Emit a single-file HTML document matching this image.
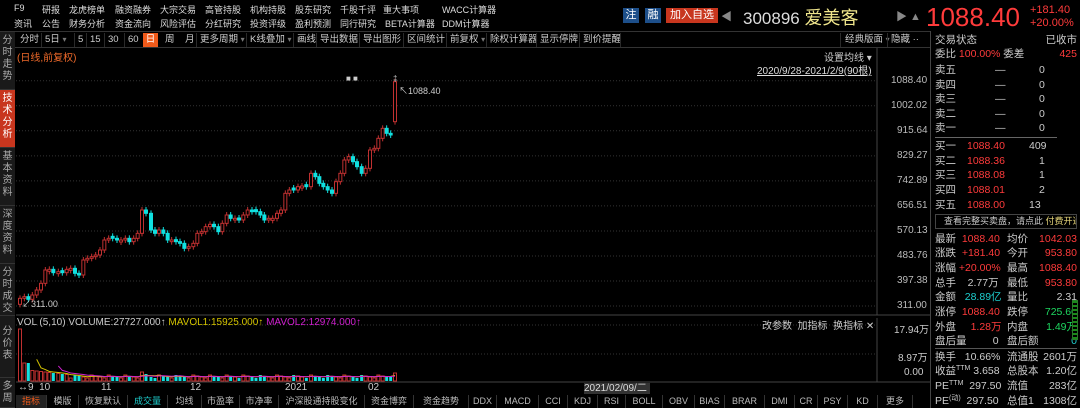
<!DOCTYPE html>
<html><head><meta charset="utf-8"><style>
*{margin:0;padding:0;box-sizing:border-box}
body{width:1080px;height:408px;background:#000;overflow:hidden;position:relative;font-family:"Liberation Sans","Noto Sans CJK SC",sans-serif;font-size:11px;color:#ccc}
.a{position:absolute;white-space:nowrap}
.r{color:#ff3b3b}.g{color:#1ed760}.c{color:#1ecfcf}.w{color:#ddd}
.side div{position:absolute;left:0;width:15px;background:#1a1a1a;color:#aaa;font-size:10px;line-height:12px;text-align:center;padding-top:3px;border-bottom:1px solid #333}
.rp div{position:absolute;height:14px;line-height:14px}
.rp sup{font-size:7px;line-height:0;vertical-align:4px}
.bt span{position:absolute;top:0;height:13px;line-height:13px;text-align:center;border-right:1px solid #333;color:#bbb;font-size:9px}
.tp span{position:absolute;font-size:9px;color:#ddd}
.tb span{position:absolute;top:0;height:14px;line-height:14px;font-size:9.5px;color:#ccc}
.tb i{position:absolute;top:0;width:1px;height:14px;background:#2a2a2a}
</style></head><body>
<div class="a tp" style="left:0;top:3px"><span style="left:14px">F9</span><span style="left:42px">研报</span><span style="left:69px">龙虎榜单</span><span style="left:115px">融资融券</span><span style="left:160px">大宗交易</span><span style="left:205px">高管持股</span><span style="left:250px">机构持股</span><span style="left:295px">股东研究</span><span style="left:340px">千股千评</span><span style="left:383px">重大事项</span><span style="left:442px">WACC计算器</span></div>
<div class="a tp" style="left:0;top:17px"><span style="left:14px">资讯</span><span style="left:42px">公告</span><span style="left:69px">财务分析</span><span style="left:115px">资金流向</span><span style="left:160px">风险评估</span><span style="left:205px">分红研究</span><span style="left:250px">投资评级</span><span style="left:295px">盈利预测</span><span style="left:340px">同行研究</span><span style="left:385px">BETA计算器</span><span style="left:442px">DDM计算器</span></div>
<div class="a" style="left:623px;top:8px;width:16px;height:15px;background:#1d4f8a;color:#fff;text-align:center;line-height:15px">注</div>
<div class="a" style="left:645px;top:8px;width:16px;height:15px;background:#1d4f8a;color:#fff;text-align:center;line-height:15px">融</div>
<div class="a" style="left:666px;top:8px;width:52px;height:15px;background:#c8361e;color:#fff;text-align:center;line-height:15px">加入自选</div>
<div class="a" style="left:721px;top:8px;color:#888">◀</div>
<div class="a" style="left:743px;top:4px;font-size:17px;color:#ddd">300896 <span style="color:#f0e68c;font-size:18px">爱美客</span></div>
<div class="a" style="left:896px;top:8px;color:#888">▶ ▲</div>
<div class="a r" style="left:926px;top:2px;font-size:26px">1088.40</div>
<div class="a r" style="left:1030px;top:4px;font-size:11px">+181.40</div>
<div class="a r" style="left:1030px;top:17px;font-size:11px">+20.00%</div>
<div class="a" style="left:0;top:31px;width:930px;height:1px;background:#333"></div>
<div class="a tb" style="left:0;top:33px;width:930px;height:14px">
<span style="left:20px">分时</span><i style="left:41px"></i><span style="left:45px">5日 <small style="color:#777">▾</small></span><i style="left:74px"></i><span style="left:78px">5</span><i style="left:86px"></i><span style="left:90px">15</span><i style="left:104px"></i><span style="left:108px">30</span><i style="left:124px"></i><span style="left:128px">60</span>
<span style="left:143px;width:15px;background:#f05a1a;color:#fff;text-align:center">日</span><span style="left:165px">周</span><span style="left:185px">月</span><i style="left:196px"></i><span style="left:200px">更多周期 <small style="color:#777">▾</small></span><i style="left:246px"></i><span style="left:250px">K线叠加 <small style="color:#777">▾</small></span><i style="left:293px"></i><span style="left:297px">画线</span><i style="left:316px"></i><span style="left:320px">导出数据</span><i style="left:359px"></i><span style="left:363px">导出图形</span><i style="left:403px"></i><span style="left:407px">区间统计</span><i style="left:446px"></i><span style="left:450px">前复权 <small style="color:#777">▾</small></span><i style="left:486px"></i><span style="left:490px">除权计算器</span><i style="left:536px"></i><span style="left:540px">显示停牌</span><i style="left:579px"></i><span style="left:583px">到价提醒</span><i style="left:620px"></i>
<i style="left:840px"></i><span style="left:845px">经典版面 <small style="color:#777">▾</small></span><i style="left:887px"></i><span style="left:891px">隐藏 ··</span>
</div>
<div class="a" style="left:0;top:47px;width:930px;height:1px;background:#333"></div>
<div class="a" style="left:17px;top:49px;color:#f06a2a;font-size:10px">(日线,前复权)</div>
<div class="a" style="left:824px;top:49px;font-size:10px;color:#ccc">设置均线 ▾</div>
<div class="a" style="left:757px;top:62px;font-size:10px;color:#ddd;text-decoration:underline">2020/9/28-2021/2/9(90根)</div>
<div class="side">
<div style="top:32px;height:58px">分<br>时<br>走<br>势</div>
<div style="top:90px;height:58px;background:#c8361e;color:#fff">技<br>术<br>分<br>析</div>
<div style="top:148px;height:58px">基<br>本<br>资<br>料</div>
<div style="top:206px;height:58px">深<br>度<br>资<br>料</div>
<div style="top:264px;height:52px">分<br>时<br>成<br>交</div>
<div style="top:316px;height:62px;padding-top:10px">分<br>价<br>表</div>
<div style="top:378px;height:30px">多<br>周</div>
</div>
<svg class="a" style="left:0;top:0" width="930" height="408" id="ch">
<g stroke="#333" stroke-dasharray="1,2" id="grid"></g>
<line x1="877" y1="48" x2="877" y2="315" stroke="#444"/>
<line x1="16" y1="315" x2="930" y2="315" stroke="#444"/>
<line x1="877" y1="318" x2="877" y2="382" stroke="#444"/>
<line x1="16" y1="382" x2="930" y2="382" stroke="#444"/>
<line x1="16" y1="325" x2="877" y2="325" stroke="#333" stroke-dasharray="1,2"/>
<line x1="16" y1="354" x2="877" y2="354" stroke="#333" stroke-dasharray="1,2"/>
<g id="cd"></g><g id="vol"></g>
<polyline id="m1" fill="none" stroke="#d4c400" stroke-width="1"/>
<polyline id="m2" fill="none" stroke="#d020d0" stroke-width="1"/>
</svg>
<div class="a" style="left:399px;top:84px;color:#ccc;font-size:9px">↖1088.40</div>
<div class="a" style="left:22px;top:297px;color:#ccc;font-size:9px">↙311.00</div>
<div class="a" style="left:346px;top:74px;color:#ccc;font-size:8px">■ ■</div>
<div class="a" style="left:393px;top:74px;color:#ccc;font-size:8px">‡</div>
<div id="yl"></div>
<div class="a" style="left:17px;top:317px;font-size:10px;color:#ccc">VOL (5,10) VOLUME:27727.000↑ <span style="color:#d4c400">MAVOL1:15925.000↑</span> <span style="color:#d020d0">MAVOL2:12974.000↑</span></div>
<div class="a" style="left:762px;top:317px;font-size:10px;color:#ccc">改参数 &nbsp;加指标 &nbsp;换指标 ✕</div>
<div class="a" style="left:894px;top:321px;font-size:10px">17.94万</div>
<div class="a" style="left:898px;top:349px;font-size:10px">8.97万</div>
<div class="a" style="left:904px;top:367px;font-size:10px">0.00</div>
<div class="a" style="left:18px;top:382px;font-size:10px;color:#ccc">↔9 &nbsp;10<span style="position:absolute;left:83px">11</span><span style="position:absolute;left:172px">12</span><span style="position:absolute;left:267px">2021</span><span style="position:absolute;left:350px">02</span></div>
<div class="a" style="left:584px;top:383px;width:66px;height:11px;background:#333;font-size:10px;line-height:11px;color:#ddd">2021/02/09/二</div>
<div class="a bt" style="left:0;top:395px;width:930px;height:13px" id="bt"></div>
<div class="a" style="left:930px;top:31px;width:1px;height:377px;background:#444"></div>
<div class="rp" style="position:absolute;left:935px;top:0;width:142px;font-size:10.5px">
<div style="top:33px;left:0">交易状态</div><div style="top:33px;right:0">已收市</div>
<div style="top:47px;left:0">委比 <span class="r">100.00%</span> 委差</div><div class="r" style="top:47px;right:0">425</div>
<div style="top:63px;left:0">卖五</div><div style="top:63px;left:60px">—</div><div style="top:63px;left:104px">0</div>
<div style="top:78px;left:0">卖四</div><div style="top:78px;left:60px">—</div><div style="top:78px;left:104px">0</div>
<div style="top:92px;left:0">卖三</div><div style="top:92px;left:60px">—</div><div style="top:92px;left:104px">0</div>
<div style="top:107px;left:0">卖二</div><div style="top:107px;left:60px">—</div><div style="top:107px;left:104px">0</div>
<div style="top:121px;left:0">卖一</div><div style="top:121px;left:60px">—</div><div style="top:121px;left:104px">0</div>
<div style="top:137px;left:0;width:122px;height:1px;background:#666"></div>
<div style="top:139px;left:0">买一</div><div class="r" style="top:139px;left:32px">1088.40</div><div style="top:139px;left:94px">409</div>
<div style="top:154px;left:0">买二</div><div class="r" style="top:154px;left:32px">1088.36</div><div style="top:154px;left:104px">1</div>
<div style="top:168px;left:0">买三</div><div class="r" style="top:168px;left:32px">1088.08</div><div style="top:168px;left:104px">1</div>
<div style="top:183px;left:0">买四</div><div class="r" style="top:183px;left:32px">1088.01</div><div style="top:183px;left:104px">2</div>
<div style="top:198px;left:0">买五</div><div class="r" style="top:198px;left:32px">1088.00</div><div style="top:198px;left:94px">13</div>
<div style="top:214px;left:0;width:142px;height:15px;border:1px solid #444;font-size:9px;padding-left:8px;line-height:13px;white-space:nowrap;overflow:hidden">查看完整买卖盘，请点此 <span style="color:#e8d77a">付费开通</span></div>
<div style="top:232px;left:0">最新 <span class="r">&nbsp;1088.40</span></div><div style="top:232px;left:72px">均价</div><div class="r" style="top:232px;right:0">1042.03</div>
<div style="top:246px;left:0">涨跌 <span class="r">&nbsp;+181.40</span></div><div style="top:246px;left:72px">今开</div><div class="r" style="top:246px;right:0">953.80</div>
<div style="top:261px;left:0">涨幅 <span class="r">+20.00%</span></div><div style="top:261px;left:72px">最高</div><div class="r" style="top:261px;right:0">1088.40</div>
<div style="top:276px;left:0">总手 &nbsp;&nbsp;&nbsp;2.77万</div><div style="top:276px;left:72px">最低</div><div class="r" style="top:276px;right:0">953.80</div>
<div style="top:290px;left:0">金额 <span class="c">&nbsp;&nbsp;28.89亿</span></div><div style="top:290px;left:72px">量比</div><div style="top:290px;right:0">2.31</div>
<div style="top:305px;left:0">涨停 <span class="r">&nbsp;1088.40</span></div><div style="top:305px;left:72px">跌停</div><div class="g" style="top:305px;right:0">725.60</div>
<div style="top:320px;left:0">外盘 <span class="r">&nbsp;&nbsp;&nbsp;&nbsp;1.28万</span></div><div style="top:320px;left:72px">内盘</div><div class="g" style="top:320px;right:0">1.49万</div>
<div style="top:334px;left:0">盘后量 &nbsp;&nbsp;&nbsp;&nbsp;&nbsp;&nbsp;&nbsp;&nbsp;0</div><div style="top:334px;left:72px">盘后额</div><div class="c" style="top:334px;right:0">0</div>
<div style="top:348px;left:0;width:142px;height:1px;background:#555"></div>
<div style="top:350px;left:0">换手 &nbsp;&nbsp;10.66%</div><div style="top:350px;left:72px">流通股</div><div style="top:350px;right:0">2601万</div>
<div style="top:364px;left:0">收益<sup>TTM</sup> 3.658</div><div style="top:364px;left:72px">总股本</div><div style="top:364px;right:0">1.20亿</div>
<div style="top:379px;left:0">PE<sup>TTM</sup> &nbsp;297.50</div><div style="top:379px;left:72px">流值</div><div style="top:379px;right:0">283亿</div>
<div style="top:394px;left:0">PE<sup>(动)</sup> &nbsp;297.50</div><div style="top:394px;left:72px">总值1</div><div style="top:394px;right:0">1308亿</div>
</div>
<div class="a" style="left:1072px;top:300px;width:6px;height:40px;border:1px solid #2a7a2a;background:repeating-linear-gradient(#1a8a1a 0 2px,#000 2px 4px)"></div>
<script>
var labs=["1088.40","1002.02","915.64","829.27","742.89","656.51","570.13","483.76","397.38","311.00"];
var g=document.getElementById('grid'),s='',h='';
for(var i=0;i<10;i++){var y=80.7+i*25.04;s+='<line x1="16" y1="'+y+'" x2="877" y2="'+y+'"/>';h+='<div class="a" style="left:'+(labs[i].length>6?891:897)+'px;top:'+(y-6)+'px;font-size:10px;color:#bbb">'+labs[i]+'</div>';}
g.innerHTML=s;document.getElementById('yl').innerHTML=h;
var tabs=[["指标",16],["模版",47],["恢复默认",79],["成交量",128],["均线",168],["市盈率",202],["市净率",240],["沪深股通持股变化",279],["资金博弈",365],["资金趋势",414],["DDX",469],["MACD",497],["CCI",539],["KDJ",568],["RSI",598],["BOLL",626],["OBV",663],["BIAS",695],["BRAR",725],["DMI",765],["CR",795],["PSY",818],["KD",848],["更多",878],["",913]];
var bh='';for(i=0;i<tabs.length-1;i++){var st='left:'+tabs[i][1]+'px;width:'+(tabs[i+1][1]-tabs[i][1])+'px;';if(i==0)st+='color:#f05a1a;background:#222;';if(i==3)st+='color:#1ecfcf;';bh+='<span style="'+st+'">'+tabs[i][0]+'</span>';}
document.getElementById('bt').innerHTML=bh;
var d=[[60,805],[73,800],[85,808],[97,795],[110,780],[123,760],[136,720],[148,718],[160,728],[175,725],[187,728],[200,718],[212,715],[225,730],[237,735],[250,690],[262,685],[275,680],[287,675],[300,660],[313,630],[326,625],[338,625],[351,630],[363,630],[376,625],[388,635],[401,625],[413,610],[426,540],[438,550],[453,600],[465,610],[477,600],[490,610],[503,630],[515,635],[528,635],[540,640],[553,655],[566,650],[580,640],[592,610],[605,605],[617,590],[630,583],[642,590],[655,605],[667,580],[680,555],[692,565],[705,570],[717,570],[730,555],[743,540],[756,545],[768,545],[781,555],[793,570],[806,565],[818,565],[831,550],[843,540],[856,490],[868,480],[881,480],[894,470],[906,468],[919,470],[933,430],[946,440],[958,460],[970,470],[983,480],[996,490],[1008,455],[1021,430],[1033,390],[1046,380],[1059,395],[1071,410],[1085,430],[1097,415],[1110,360],[1123,355],[1135,325],[1148,295],[1160,310],[1172,315],[1185,155]];
var c='',v='',m1=[],m2=[],vs=[];
for(i=0;i<d.length;i++){var x=d[i][0]/3,cl=d[i][1]/3+30,op=i? (d[i-1][1]/3+30):cl+6;if(i==d.length-1)op=275/3+30;
var up=cl<op||(i%3==0&&Math.abs(cl-op)<2);if(Math.abs(cl-op)<1.5){op=cl+(up?2:-2);}
var t=Math.min(cl,op),b=Math.max(cl,op),col=up?'#c03030':'#10e0e0';
c+='<line x1="'+x+'" x2="'+x+'" y1="'+(t-3)+'" y2="'+(b+3)+'" stroke="'+col+'"/>';
c+='<rect x="'+(x-1.5)+'" y="'+t+'" width="3" height="'+(b-t)+'" fill="'+(up?'#000':col)+'" stroke="'+col+'" stroke-width="1"/>';
var vh=i==0?52:i<3?18:i<12?Math.max(4,12-i/2):(3+((i*7)%4));if(i==29)vh=9;if(i==30)vh=7;if(i==d.length-1)vh=8;if(i==d.length-2)vh=5;
vs.push(vh);v+='<rect x="'+(x-1.5)+'" y="'+(381-vh)+'" width="3" height="'+vh+'" fill="'+(up?'#000':'#10e0e0')+'" stroke="'+(up?'#c03030':'none')+'"/>';
var a1=0,n1=Math.min(5,i+1);for(var k=0;k<n1;k++)a1+=vs[i-k];a1/=n1;var a2=0,n2=Math.min(10,i+1);for(k=0;k<n2;k++)a2+=vs[i-k];a2/=n2;
if(i>=4)m1.push(x+','+(381-a1));if(i>=9)m2.push(x+','+(381-a2));}
document.getElementById('cd').innerHTML=c;document.getElementById('vol').innerHTML=v;
document.getElementById('m1').setAttribute('points',m1.join(' '));document.getElementById('m2').setAttribute('points',m2.join(' '));
</script>
</body></html>
